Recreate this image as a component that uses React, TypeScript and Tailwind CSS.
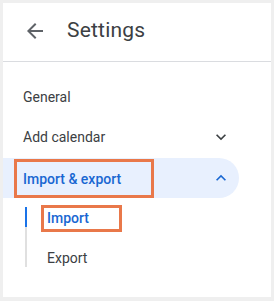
import React from "react";

const ORANGE = "border-[#e9784a]";

function Chevron({ up, className }: { up?: boolean; className?: string }) {
  return (
    <svg width="20" height="20" viewBox="0 0 24 24" className={className} fill="currentColor">
      {up ? (
        <path d="M7.41 15.41L12 10.83l4.59 4.58L18 14l-6-6-6 6z" />
      ) : (
        <path d="M7.41 8.59L12 13.17l4.59-4.58L18 10l-6 6-6-6 1.41-1.41z" />
      )}
    </svg>
  );
}

export default function App() {
  return (
    <div className="w-[274px] h-[301px] bg-[#efefef] pt-[3px] px-[3px] pb-[4px] font-['Roboto',sans-serif]">
      <div className="h-full bg-white flex flex-col">
        <div className="h-[59px] flex items-center border-b border-[#dadce0] pl-5 shrink-0">
          <svg width="24" height="24" viewBox="0 0 24 24" className="text-[#5f6368] -mt-[2px]" fill="currentColor">
            <path d="M20 11H7.83l5.59-5.59L12 4l-8 8 8 8 1.41-1.41L7.83 13H20v-2z" />
          </svg>
          <span className="ml-5 text-[21px] tracking-[0.2px] text-[#3c4043] -mt-[2px]">Settings</span>
        </div>

        <nav className="pt-[15px] flex flex-col">
          <div className="h-10 flex items-center pl-5 text-sm text-[#3c4043]">General</div>
          <div className="h-10 flex items-center pl-5 pr-2 text-sm text-[#3c4043] w-[236px] justify-between">
            <span>Add calendar</span>
            <Chevron className="text-[#3c4043]" />
          </div>
          <div className="mt-[1px] h-10 w-[236px] bg-[#e8f0fe] rounded-r-full flex items-center justify-between pl-[11px] pr-2">
            <div className={`w-[140px] h-[39px] mt-[1px] border-[3px] ${ORANGE} flex items-center pl-[6px] text-sm font-medium text-[#1967d2]`}>
              Import &amp; export
            </div>
            <Chevron up className="text-[#1967d2]" />
          </div>
          <div className="flex pl-[22px]">
            <div className="mt-[9px] h-[60px] w-[2px] bg-[#e0e0e0] flex flex-col">
              <div className="h-5 bg-[#1a73e8]" />
            </div>
            <div className="flex flex-col">
              <div className="h-10 flex items-center pl-[14px]">
                <div className={`w-[81px] h-[27px] border-[3px] ${ORANGE} flex items-center pl-[3px] text-sm font-medium text-[#1967d2]`}>
                  Import
                </div>
              </div>
              <div className="h-10 flex items-center pl-5 text-sm text-[#3c4043]">Export</div>
            </div>
          </div>
        </nav>
      </div>
    </div>
  );
}
